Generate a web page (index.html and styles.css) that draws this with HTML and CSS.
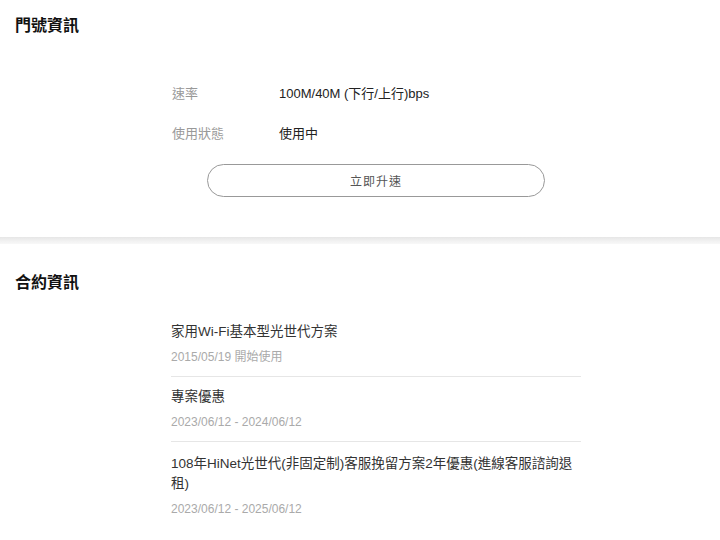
FILE: index.html
```html
<!DOCTYPE html>
<html lang="zh-Hant">
<head>
<meta charset="utf-8">
<link rel="stylesheet" href="styles.css">
</head>
<body>
<section class="sec sec-top">
  <h2 class="sec-title">門號資訊</h2>
  <div class="content">
    <div class="kv">
      <div class="kv-row"><span class="kv-label">速率</span><span class="kv-value">100M/40M (下行/上行)bps</span></div>
      <div class="kv-row"><span class="kv-label">使用狀態</span><span class="kv-value">使用中</span></div>
    </div>
    <button class="btn">立即升速</button>
  </div>
</section>
<div class="divider"></div>
<section class="sec sec-bottom">
  <h2 class="sec-title">合約資訊</h2>
  <div class="content">
    <ul class="list">
      <li class="item">
        <div class="item-title">家用Wi-Fi基本型光世代方案</div>
        <div class="item-date">2015/05/19 開始使用</div>
      </li>
      <li class="item">
        <div class="item-title">專案優惠</div>
        <div class="item-date">2023/06/12 - 2024/06/12</div>
      </li>
      <li class="item">
        <div class="item-title">108年HiNet光世代(非固定制)客服挽留方案2年優惠(進線客服諮詢退租)</div>
        <div class="item-date">2023/06/12 - 2025/06/12</div>
      </li>
    </ul>
  </div>
</section>
</body>
</html>
```
FILE: styles.css
```css
* { box-sizing: border-box; }
html, body { margin: 0; padding: 0; background: #fff; }
body {
  width: 720px;
  font-family: "Liberation Sans", "Noto Sans CJK TC", sans-serif;
  color: #333;
}
.sec { padding: 15px 15px 0; }
.sec-top { height: 237px; }
.sec-title {
  margin: 0;
  font-size: 16px;
  line-height: 22px;
  font-weight: bold;
  color: #111;
}
.content {
  margin-left: 156px;
  width: 410px;
}
.sec-top .content { padding-top: 45px; }
.kv { display: flex; flex-direction: column; gap: 20px; }
.kv-row { display: flex; align-items: center; height: 20px; font-size: 13px; }
.kv-label { width: 108px; color: #999; padding-left: 1px; }
.kv-value { color: #222; }
.btn {
  display: block;
  margin: 22px 36px 0;
  width: 338px;
  height: 33px;
  border: 1px solid #999;
  border-radius: 17px;
  background: #fff;
  font-family: inherit;
  font-size: 12px;
  color: #555;
  letter-spacing: 1px;
  padding: 0;
}
.divider {
  height: 7px;
  background: linear-gradient(#e6e6e6, #f2f2f2 60%, #f8f8f8);
}
.sec-bottom { padding-top: 28px; }
.sec-bottom .content { padding-top: 28px; }
.list { list-style: none; margin: 0; padding: 0; }
.item { padding: 10px 0 9px; border-bottom: 1px solid #e6e6e6; }
.item:first-child { padding-top: 0; }
.item:last-child { border-bottom: none; padding-top: 12px; }
.item-title { font-size: 13.5px; line-height: 20px; color: #333; }
.item-date { margin-top: 5px; font-size: 12px; line-height: 20px; color: #aaa; }
```
